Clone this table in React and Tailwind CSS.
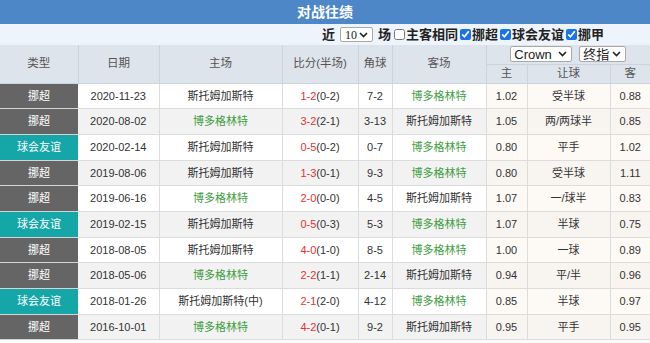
import { useState } from 'react'

const ROWS = [
  { type: '挪超', date: '2020-11-23', home: '斯托姆加斯特', score: '1-2', half: '(0-2)', corner: '7-2', away: '博多格林特', h: '1.02', line: '受半球', a: '0.88' },
  { type: '挪超', date: '2020-08-02', home: '博多格林特', score: '3-2', half: '(2-1)', corner: '3-13', away: '斯托姆加斯特', h: '1.05', line: '两/两球半', a: '0.85' },
  { type: '球会友谊', date: '2020-02-14', home: '斯托姆加斯特', score: '0-5', half: '(0-2)', corner: '0-7', away: '博多格林特', h: '0.80', line: '平手', a: '1.02' },
  { type: '挪超', date: '2019-08-06', home: '斯托姆加斯特', score: '1-3', half: '(0-1)', corner: '9-3', away: '博多格林特', h: '0.80', line: '受半球', a: '1.11' },
  { type: '挪超', date: '2019-06-16', home: '博多格林特', score: '2-0', half: '(0-0)', corner: '4-5', away: '斯托姆加斯特', h: '1.07', line: '一/球半', a: '0.83' },
  { type: '球会友谊', date: '2019-02-15', home: '斯托姆加斯特', score: '0-5', half: '(0-3)', corner: '5-3', away: '博多格林特', h: '1.07', line: '半球', a: '0.75' },
  { type: '挪超', date: '2018-08-05', home: '斯托姆加斯特', score: '4-0', half: '(1-0)', corner: '8-5', away: '博多格林特', h: '1.00', line: '一球', a: '0.89' },
  { type: '挪超', date: '2018-05-06', home: '博多格林特', score: '2-2', half: '(1-1)', corner: '2-14', away: '斯托姆加斯特', h: '0.94', line: '平/半', a: '0.96' },
  { type: '球会友谊', date: '2018-01-26', home: '斯托姆加斯特(中)', score: '2-1', half: '(2-0)', corner: '4-12', away: '博多格林特', h: '0.85', line: '半球', a: '0.97' },
  { type: '挪超', date: '2016-10-01', home: '博多格林特', score: '4-2', half: '(0-1)', corner: '9-2', away: '斯托姆加斯特', h: '0.95', line: '平手', a: '0.95' },
]

const FONT = { fontFamily: '"Liberation Sans", "Noto Sans CJK SC", sans-serif' }

function Chevron() {
  return (
    <svg width="9" height="6" viewBox="0 0 9 6" className="shrink-0">
      <path d="M1 1l3.5 3.5L8 1" fill="none" stroke="#222" strokeWidth="1.6" />
    </svg>
  )
}

function FakeSelect({ label, className, labelClass = '' }) {
  return (
    <div className={`flex items-center justify-between bg-white border border-[#a9a9a9] rounded-[2px] pr-[4px] ${className}`}>
      <span className={`leading-none ${labelClass}`}>{label}</span>
      <Chevron />
    </div>
  )
}

function Check({ label, checked }) {
  const [on, setOn] = useState(checked)
  return (
    <label className="flex items-center">
      <input
        type="checkbox"
        checked={on}
        onChange={() => setOn(!on)}
        className="w-[11px] h-[11px] m-0 mr-[1px] accent-[#1a73e8]"
      />
      <span>{label}</span>
    </label>
  )
}

const isGreen = name => name.startsWith('博多')

export default function App() {
  const td = 'border-b border-r border-[#dcdcdc] text-center p-0'
  return (
    <div className="w-[650px] h-[343px] overflow-hidden bg-white text-[#333]" style={FONT}>
      {/* Title */}
      <div className="h-[24px] bg-[#4d87c7] text-white font-bold text-[14px] flex items-center justify-center">
        对战往绩
      </div>

      {/* Filters */}
      <div className="h-[21px] bg-[#eef4fb] flex items-center justify-end pr-[46px] gap-[2px] text-[13px] font-bold text-[#222]">
        <span>近</span>
        <FakeSelect
          label="10"
          className="w-[33px] h-[15px] mx-[3px] font-normal"
          labelClass="text-[12px] pl-[4px] font-['Liberation_Serif']"
        />
        <span className="mr-[1px]">场</span>
        <Check label="主客相同" checked={false} />
        <Check label="挪超" checked />
        <Check label="球会友谊" checked />
        <Check label="挪甲" checked />
      </div>

      <table className="w-[650px] table-fixed text-[11px]">
        <colgroup>
          <col className="w-[78px]" />
          <col className="w-[81px]" />
          <col className="w-[123px]" />
          <col className="w-[76px]" />
          <col className="w-[34px]" />
          <col className="w-[94px]" />
          <col className="w-[41px]" />
          <col className="w-[83px]" />
          <col className="w-[40px]" />
        </colgroup>
        <thead className="bg-[#dde4ec] text-[#555] text-[11.5px]">
          <tr className="h-[19px]">
            {['类型', '日期', '主场', '比分(半场)', '角球', '客场'].map(h => (
              <th key={h} rowSpan={2} className="font-normal border-r border-b border-[#cbd3dd] p-0">
                {h}
              </th>
            ))}
            <th colSpan={3} className="font-normal border-b border-[#cbd3dd] p-0">
              <div className="flex items-center justify-center gap-[7px] text-[13px] text-[#222]">
                <FakeSelect label="Crown" className="w-[62px] h-[16px]" labelClass="pl-[3px]" />
                <FakeSelect label="终指" className="w-[47px] h-[16px]" labelClass="pl-[3px]" />
              </div>
            </th>
          </tr>
          <tr className="h-[19px]">
            <th className="font-normal border-r border-b border-[#cbd3dd] p-0">主</th>
            <th className="font-normal border-r border-b border-[#cbd3dd] p-0">让球</th>
            <th className="font-normal border-b border-[#cbd3dd] p-0">客</th>
          </tr>
        </thead>
        <tbody>
          {ROWS.map((r, i) => {
            const bg = i % 2 === 1 ? 'bg-[#f2f2f2]' : 'bg-white'
            const odds = i % 2 === 1 ? 'bg-[#f8f5f1]' : 'bg-[#fdfaf6]'
            return (
              <tr key={r.date} className="h-[25.7px]">
                <td
                  className={`border-b border-[#d5d5d5] text-center p-0 text-white ${
                    r.type === '挪超' ? 'bg-[#656565]' : 'bg-[#15a6a8]'
                  }`}
                >
                  {r.type}
                </td>
                <td className={`${td} ${bg}`}>{r.date}</td>
                <td className={`${td} ${bg} ${isGreen(r.home) ? 'text-[#3f9d3f]' : ''}`}>{r.home}</td>
                <td className={`${td} ${bg}`}>
                  <span className="text-[#e53030]">{r.score}</span>
                  {r.half}
                </td>
                <td className={`${td} ${bg}`}>{r.corner}</td>
                <td className={`${td} ${bg} ${isGreen(r.away) ? 'text-[#3f9d3f]' : ''}`}>{r.away}</td>
                <td className={`${td} ${odds}`}>{r.h}</td>
                <td className={`${td} ${odds}`}>{r.line}</td>
                <td className={`border-b border-[#dcdcdc] text-center p-0 ${odds}`}>{r.a}</td>
              </tr>
            )
          })}
        </tbody>
      </table>
    </div>
  )
}
